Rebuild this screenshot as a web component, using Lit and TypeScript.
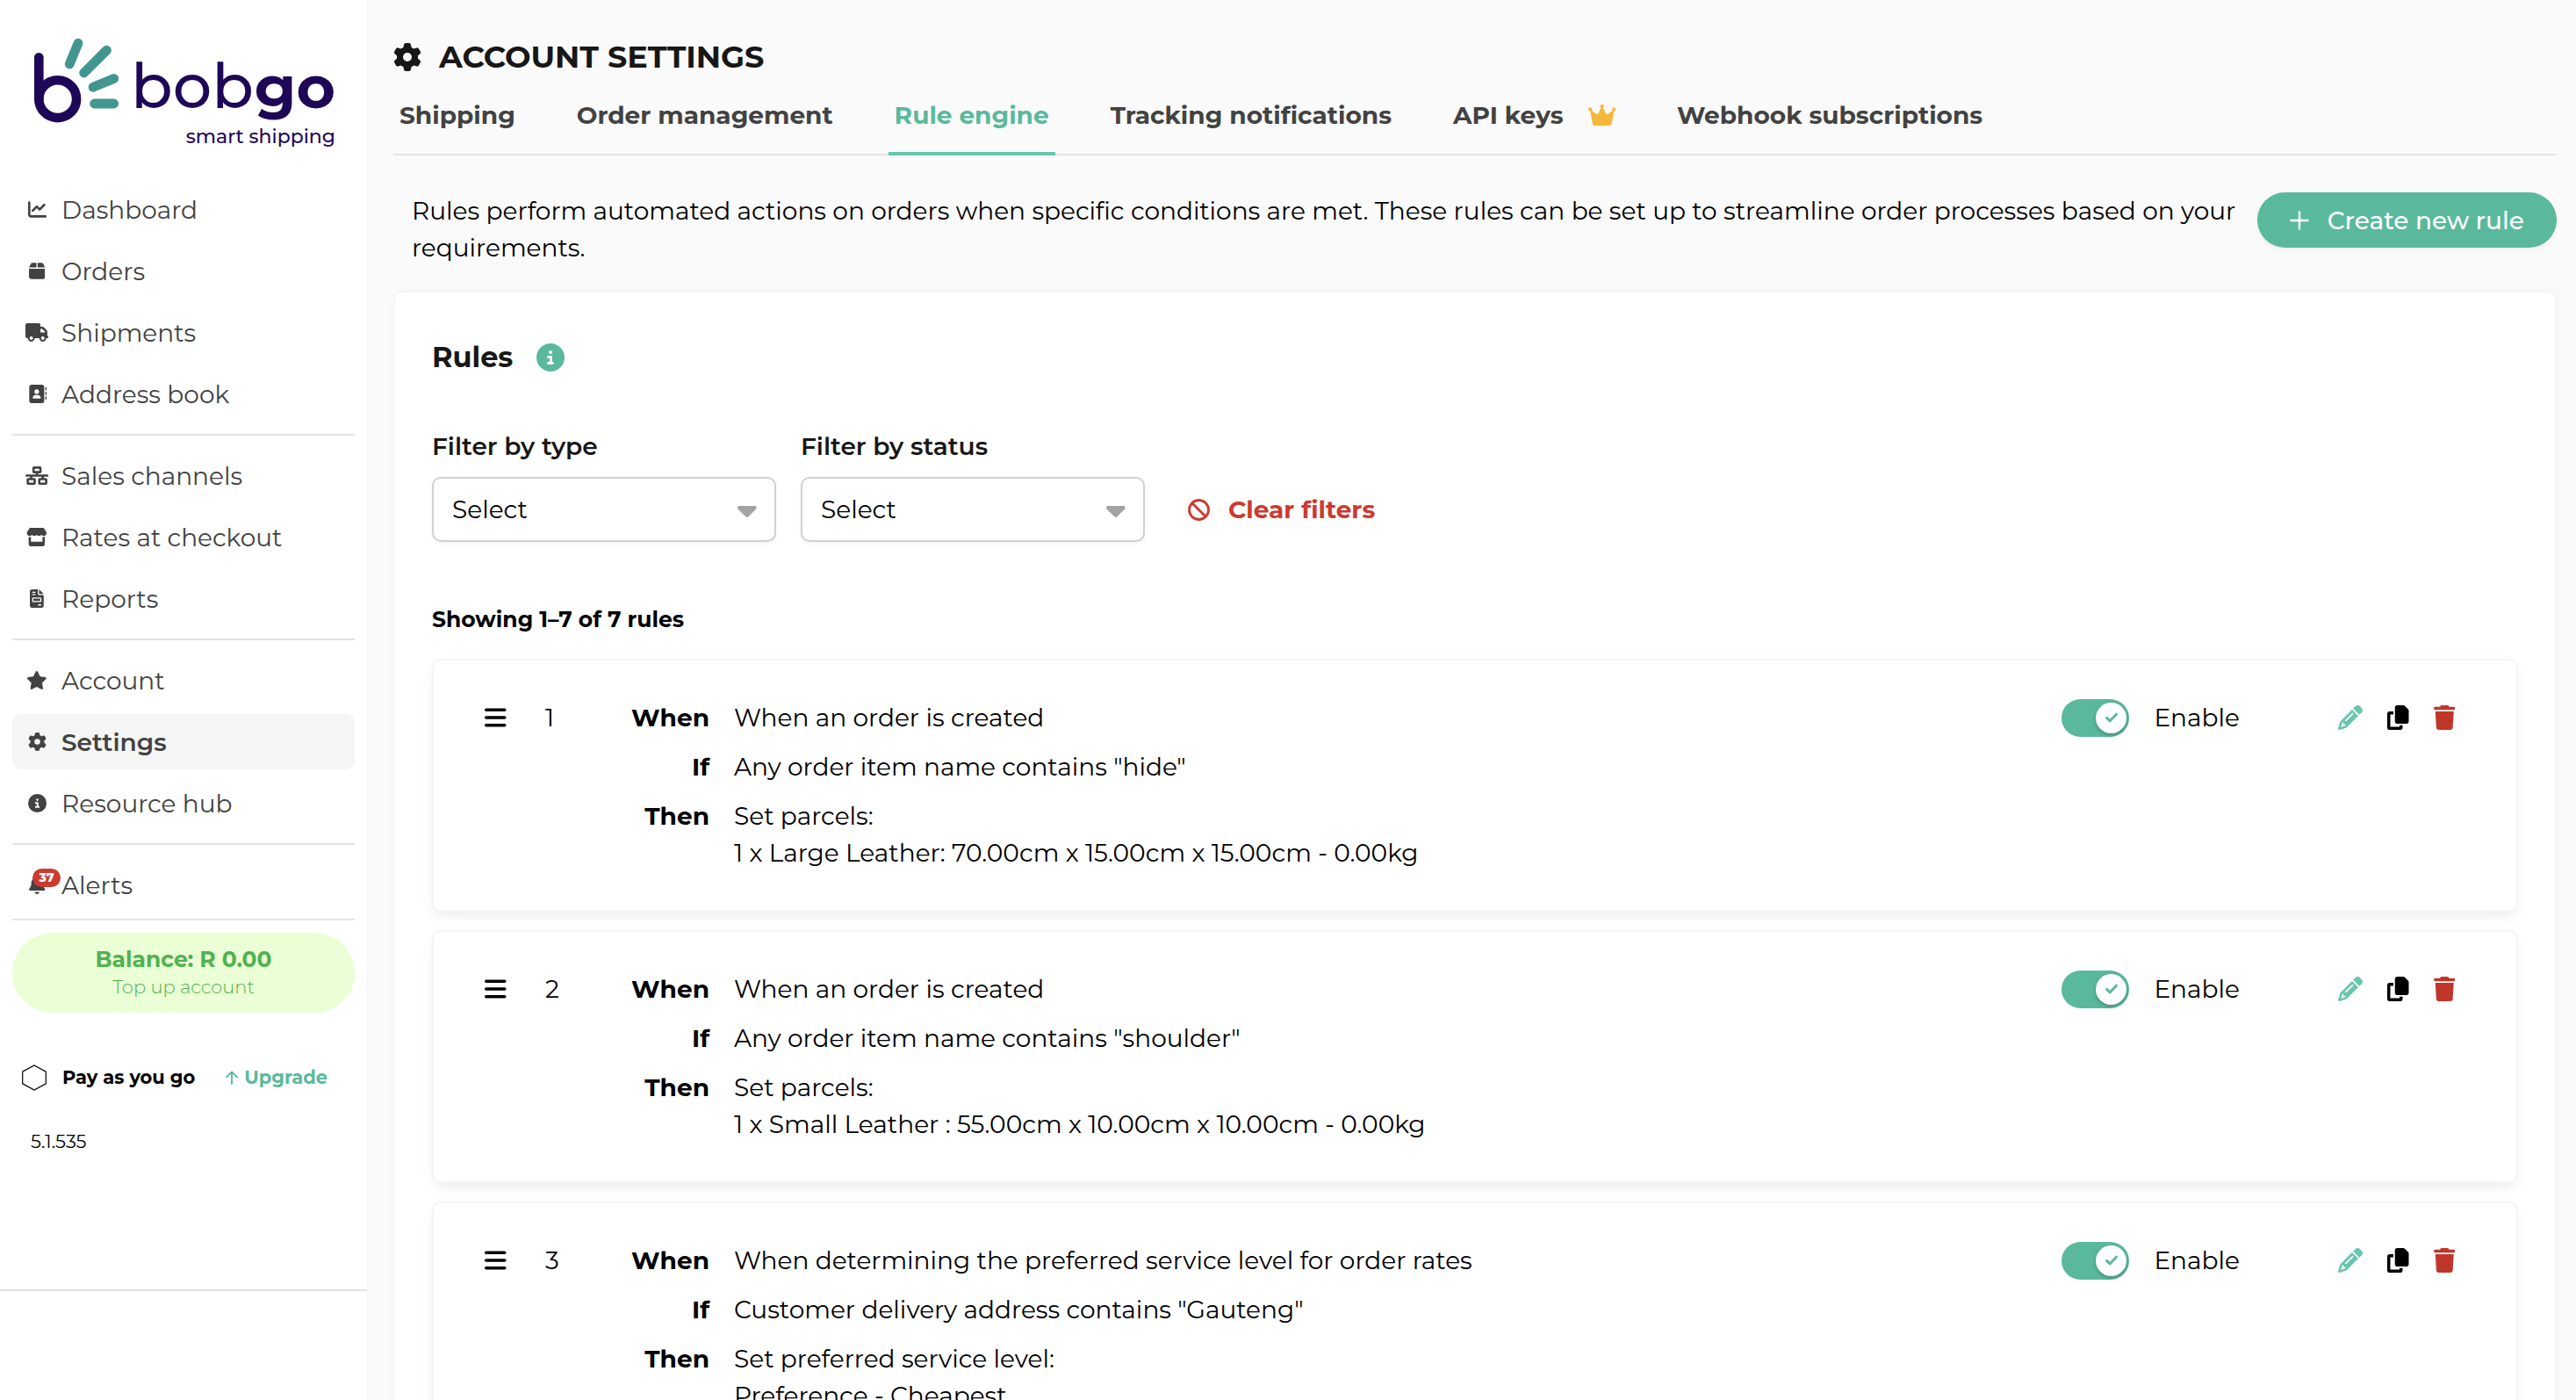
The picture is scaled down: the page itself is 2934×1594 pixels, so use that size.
import { LitElement, html, svg, css, nothing } from "lit";
import { customElement, property } from "lit/decorators.js";

type Glyph = { w: number; h: number; d: string };

const GLYPHS: Record<string, Glyph> = {
  chart: { w: 512, h: 512, d: "M64 64c0-17.700-14.300-32-32-32S0 46.300 0 64V400c0 44.200 35.800 80 80 80H480c17.700 0 32-14.300 32-32s-14.300-32-32-32H80c-8.800 0-16-7.200-16-16V64zm406.600 86.600c12.500-12.500 12.500-32.800 0-45.300s-32.800-12.500-45.300 0L320 210.700l-57.400-57.400c-12.500-12.500-32.800-12.500-45.300 0l-112 112c-12.500 12.500-12.500 32.800 0 45.300s32.800 12.500 45.300 0L240 221.300l57.400 57.400c12.500 12.500 32.800 12.500 45.300 0l128-128z" },
  box: { w: 448, h: 512, d: "M50.700 58.500L0 160H208V32H93.700C75.500 32 58.900 42.300 50.700 58.500zM240 160H448L397.300 58.500C389.100 42.300 372.500 32 354.300 32H240V160zm208 32H0V416c0 35.300 28.700 64 64 64H384c35.300 0 64-28.700 64-64V192z" },
  truck: { w: 640, h: 512, d: "M48 0C21.500 0 0 21.500 0 48V368c0 26.500 21.500 48 48 48H64c0 53 43 96 96 96s96-43 96-96H384c0 53 43 96 96 96s96-43 96-96h32c17.700 0 32-14.300 32-32s-14.300-32-32-32V288 256 237.300c0-17-6.700-33.300-18.700-45.300L512 114.700c-12-12-28.300-18.700-45.300-18.700H416V48c0-26.500-21.500-48-48-48H48zM416 160h50.700L544 237.300V256H416V160zM112 416a48 48 0 1 1 96 0 48 48 0 1 1 -96 0zm368-48a48 48 0 1 1 0 96 48 48 0 1 1 0-96z" },
  book: { w: 512, h: 512, d: "M96 0C60.700 0 32 28.700 32 64V448c0 35.300 28.700 64 64 64H384c35.300 0 64-28.700 64-64V64c0-35.300-28.700-64-64-64H96zM208 288h64c44.200 0 80 35.800 80 80c0 8.800-7.200 16-16 16H144c-8.800 0-16-7.200-16-16c0-44.200 35.800-80 80-80zm-32-96a64 64 0 1 1 128 0 64 64 0 1 1 -128 0zM512 80c0-8.800-7.200-16-16-16s-16 7.200-16 16v64c0 8.800 7.200 16 16 16s16-7.200 16-16V80zM496 192c-8.800 0-16 7.200-16 16v64c0 8.800 7.200 16 16 16s16-7.200 16-16V208c0-8.800-7.200-16-16-16zm16 144c0-8.800-7.200-16-16-16s-16 7.200-16 16v64c0 8.800 7.200 16 16 16s16-7.200 16-16V336z" },
  network: { w: 640, h: 512, d: "M256 64H384v64H256V64zM240 0c-26.500 0-48 21.500-48 48v96c0 26.500 21.500 48 48 48h48v32H32c-17.700 0-32 14.300-32 32s14.300 32 32 32h96v32H80c-26.500 0-48 21.500-48 48v96c0 26.500 21.500 48 48 48H240c26.500 0 48-21.500 48-48V368c0-26.500-21.500-48-48-48H192V288H448v32H400c-26.500 0-48 21.500-48 48v96c0 26.500 21.500 48 48 48H560c26.500 0 48-21.500 48-48V368c0-26.500-21.500-48-48-48H512V288h96c17.700 0 32-14.300 32-32s-14.300-32-32-32H352V192h48c26.500 0 48-21.500 48-48V48c0-26.500-21.500-48-48-48H240zM96 448V384H224v64H96zm320-64H544v64H416V384z" },
  store: { w: 576, h: 512, d: "M547.600 103.800L490.300 13.100C485.200 5 476.100 0 466.400 0H109.600C99.900 0 90.800 5 85.700 13.100L28.300 103.800c-29.600 46.800-3.400 111.900 51.900 119.400c4 .5 8.100 .8 12.100 .8c26.100 0 49.300-11.400 65.200-29c15.900 17.600 39.100 29 65.200 29c26.100 0 49.300-11.400 65.200-29c15.900 17.600 39.100 29 65.200 29c26.200 0 49.300-11.400 65.200-29c16 17.600 39.100 29 65.200 29c4.100 0 8.100-.3 12.100-.8c55.500-7.400 81.800-72.500 52.100-119.400zM499.700 254.900l-.1 0c-5.300 .7-10.700 1.100-16.200 1.100c-12.400 0-24.300-1.900-35.400-5.300V384H128V250.600c-11.200 3.500-23.200 5.400-35.600 5.400c-5.500 0-11-.4-16.300-1.100l-.1 0c-4.100-.6-8.100-1.300-12-2.300V384v64c0 35.300 28.700 64 64 64H448c35.300 0 64-28.700 64-64V384 252.600c-4 1-8 1.800-12.300 2.300z" },
  invoice: { w: 384, h: 512, d: "M64 0C28.700 0 0 28.700 0 64V448c0 35.300 28.700 64 64 64H320c35.300 0 64-28.700 64-64V160H256c-17.700 0-32-14.300-32-32V0H64zM256 0V128H384L256 0zM80 64h64c8.800 0 16 7.200 16 16s-7.200 16-16 16H80c-8.800 0-16-7.200-16-16s7.200-16 16-16zm0 64h64c8.800 0 16 7.200 16 16s-7.200 16-16 16H80c-8.800 0-16-7.200-16-16s7.200-16 16-16zm16 96H288c17.700 0 32 14.300 32 32v64c0 17.700-14.300 32-32 32H96c-17.700 0-32-14.300-32-32V256c0-17.700 14.300-32 32-32zm0 32v64H288V256H96zM240 416h64c8.800 0 16 7.200 16 16s-7.200 16-16 16H240c-8.800 0-16-7.200-16-16s7.200-16 16-16z" },
  star: { w: 576, h: 512, d: "M316.900 18C311.600 7 300.400 0 288.100 0s-23.400 7-28.800 18L195 150.300 51.400 171.500c-12 1.800-22 10.200-25.700 21.700s-.7 24.200 7.900 32.700L137.800 329 113.200 474.700c-2 12 3 24.200 12.900 31.300s23 8 33.800 2.300l128.300-68.500 128.300 68.500c10.800 5.700 23.900 4.900 33.800-2.300s14.900-19.300 12.900-31.300L438.500 329 542.700 225.900c8.600-8.500 11.700-21.200 7.900-32.700s-13.700-19.900-25.700-21.700L381.200 150.300 316.900 18z" },
  gear: { w: 512, h: 512, d: "M495.900 166.600c3.200 8.700 .5 18.400-6.400 24.600l-43.300 39.400c1.100 8.300 1.700 16.800 1.700 25.400s-.6 17.100-1.700 25.400l43.300 39.400c6.900 6.200 9.600 15.900 6.400 24.600c-4.400 11.900-9.700 23.300-15.800 34.300l-4.700 8.100c-6.600 11-14 21.400-22.100 31.200c-5.900 7.200-15.700 9.600-24.500 6.800l-55.700-17.700c-13.400 10.300-28.200 18.900-44 25.400l-12.500 57.100c-2 9.100-9 16.300-18.200 17.800c-13.800 2.300-28 3.500-42.500 3.500s-28.700-1.200-42.500-3.500c-9.200-1.500-16.200-8.700-18.200-17.800l-12.500-57.100c-15.800-6.500-30.600-15.100-44-25.400L83.100 425.900c-8.800 2.800-18.600 .3-24.500-6.800c-8.100-9.800-15.500-20.200-22.100-31.200l-4.700-8.100c-6.100-11-11.400-22.400-15.800-34.300c-3.200-8.700-.5-18.400 6.400-24.600l43.300-39.400C64.600 273.100 64 264.600 64 256s.6-17.100 1.700-25.400L22.400 191.200c-6.900-6.200-9.600-15.900-6.400-24.600c4.400-11.900 9.700-23.300 15.800-34.300l4.700-8.100c6.600-11 14-21.400 22.100-31.200c5.900-7.200 15.700-9.600 24.500-6.800l55.700 17.700c13.400-10.300 28.200-18.900 44-25.400l12.500-57.100c2-9.100 9-16.300 18.200-17.800C227.300 1.200 241.500 0 256 0s28.700 1.200 42.500 3.500c9.200 1.500 16.200 8.700 18.200 17.800l12.500 57.100c15.800 6.500 30.600 15.100 44 25.400l55.700-17.700c8.800-2.800 18.600-.3 24.500 6.800c8.100 9.800 15.500 20.200 22.100 31.200l4.700 8.100c6.100 11 11.400 22.400 15.800 34.300zM256 336a80 80 0 1 0 0-160 80 80 0 1 0 0 160z" },
  info: { w: 512, h: 512, d: "M256 512A256 256 0 1 0 256 0a256 256 0 1 0 0 512zM216 336h24V272H216c-13.300 0-24-10.700-24-24s10.700-24 24-24h48c13.300 0 24 10.700 24 24v88h8c13.300 0 24 10.700 24 24s-10.700 24-24 24H216c-13.300 0-24-10.700-24-24s10.700-24 24-24zm40-208a32 32 0 1 1 0 64 32 32 0 1 1 0-64z" },
  bell: { w: 448, h: 512, d: "M224 0c-17.700 0-32 14.300-32 32V51.200C119 66 64 130.600 64 208v18.800c0 47-17.300 92.400-48.500 127.600l-7.400 8.300c-8.400 9.400-10.400 22.900-5.300 34.400S19.400 416 32 416H416c12.600 0 24-7.400 29.200-18.900s3.100-25-5.300-34.400l-7.400-8.300C401.300 319.200 384 273.900 384 226.800V208c0-77.400-55-142-128-156.800V32c0-17.700-14.300-32-32-32zm45.300 493.300c12-12 18.700-28.300 18.700-45.300H224 160c0 17 6.700 33.300 18.700 45.300s28.300 18.700 45.300 18.700s33.300-6.700 45.300-18.700z" },
  crown: { w: 576, h: 512, d: "M309 106c11.400-7 19-19.700 19-34c0-22.100-17.900-40-40-40s-40 17.900-40 40c0 14.400 7.600 27 19 34L209.700 220.600c-9.100 18.200-32.700 23.400-48.600 10.700L72 160c5-6.700 8-15 8-24c0-22.100-17.900-40-40-40S0 113.900 0 136s17.900 40 40 40c.2 0 .5 0 .7 0L86.400 427.400c5.500 30.400 32 52.600 63 52.600H426.600c30.900 0 57.400-22.100 63-52.600L535.300 176c.2 0 .5 0 .7 0c22.100 0 40-17.900 40-40s-17.900-40-40-40s-40 17.900-40 40c0 9 3 17.300 8 24l-89.100 71.300c-15.900 12.700-39.500 7.500-48.600-10.700L309 106z" },
  bars: { w: 448, h: 512, d: "M0 96C0 78.300 14.300 64 32 64H416c17.700 0 32 14.300 32 32s-14.300 32-32 32H32C14.300 128 0 113.700 0 96zM0 256c0-17.700 14.300-32 32-32H416c17.700 0 32 14.300 32 32s-14.300 32-32 32H32c-17.700 0-32-14.300-32-32zM448 416c0 17.700-14.300 32-32 32H32c-17.700 0-32-14.300-32-32s14.300-32 32-32H416c17.700 0 32 14.300 32 32z" },
  pencil: { w: 512, h: 512, d: "M410.300 231l11.300-11.300-33.900-33.900-62.100-62.100L291.700 89.800l-11.300 11.300-22.600 22.600L58.600 322.900c-10.400 10.400-18 23.300-22.200 37.400L1 480.700c-2.500 8.400-.2 17.500 6.100 23.700s15.300 8.500 23.700 6.100l120.300-35.400c14.100-4.200 27-11.800 37.400-22.200L387.700 253.700 410.300 231zM160 399.400l-9.100 22.700c-4 3.100-8.500 5.400-13.300 6.900L59.400 452l23-78.100c1.400-4.900 3.800-9.400 6.900-13.300l22.700-9.100v32c0 8.800 7.200 16 16 16h32zM362.700 18.700L348.300 33.200 325.700 55.800 314.300 67.100l33.900 33.900 62.100 62.100 33.900 33.900 11.300-11.300 22.600-22.600 14.500-14.500c25-25 25-65.500 0-90.500L453.300 18.700c-25-25-65.500-25-90.500 0zm-47.400 168l-144 144c-6.200 6.200-16.400 6.200-22.600 0s-6.200-16.400 0-22.600l144-144c6.200-6.200 16.400-6.200 22.600 0s6.200 16.400 0 22.600z" },
  copy: { w: 448, h: 512, d: "M208 0H332.100c12.700 0 24.900 5.100 33.900 14.100l67.900 67.900c9 9 14.100 21.200 14.100 33.900V336c0 26.500-21.500 48-48 48H208c-26.500 0-48-21.500-48-48V48c0-26.500 21.500-48 48-48zM48 128h80v64H64V448H256V416h64v48c0 26.500-21.500 48-48 48H48c-26.500 0-48-21.500-48-48V176c0-26.500 21.500-48 48-48z" },
  trash: { w: 448, h: 512, d: "M135.200 17.700L128 32H32C14.300 32 0 46.300 0 64S14.300 96 32 96H416c17.700 0 32-14.300 32-32s-14.300-32-32-32H320l-7.200-14.300C307.400 6.800 296.300 0 284.200 0H163.800c-12.100 0-23.200 6.800-28.600 17.700zM416 128H32L53.200 467c1.600 25.300 22.600 45 47.900 45H346.900c25.300 0 46.300-19.700 47.900-45L416 128z" },
  caret: { w: 320, h: 192, d: "M137.400 182.600c12.500 12.500 32.800 12.500 45.300 0l128-128c9.200-9.200 11.900-22.900 6.900-34.900S301 0 288 0L32 0C19.100 0 7.400 7.800 2.400 19.800s-2.200 25.700 6.900 34.900l128 128z" },
};

/** Filled glyph; its height comes from the class, its width from the glyph's proportions. */
const icon = (name: string, cls: string) => {
  const g = GLYPHS[name];
  return html`<svg class="glyph ${cls}" viewBox="0 0 ${g.w} ${g.h}" aria-hidden="true">${svg`<path d=${g.d} fill="currentColor" fill-rule="nonzero"></path>`}</svg>`;
};

const base = css`
  *, *::before, *::after { box-sizing: border-box; }
  a { color: inherit; text-decoration: none; }
  button, select, input { font: inherit; color: inherit; margin: 0; }
  button { background: none; border: 0; padding: 0; cursor: pointer; }
  .glyph { display: block; flex: none; }
`;

type NavItem = { icon: string; label: string; active?: boolean; badge?: string };

const NAV: NavItem[][] = [
  [
    { icon: "chart", label: "Dashboard" },
    { icon: "box", label: "Orders" },
    { icon: "truck", label: "Shipments" },
    { icon: "book", label: "Address book" },
  ],
  [
    { icon: "network", label: "Sales channels" },
    { icon: "store", label: "Rates at checkout" },
    { icon: "invoice", label: "Reports" },
  ],
  [
    { icon: "star", label: "Account" },
    { icon: "gear", label: "Settings", active: true },
    { icon: "info", label: "Resource hub" },
  ],
  [{ icon: "bell", label: "Alerts", badge: "37" }],
];

@customElement("side-bar")
class SideBar extends LitElement {
  static styles = [base, css`
    :host {
      display: flex; flex-direction: column; width: 418px; flex: none;
      background: #fff; box-shadow: 0 0 4px rgba(0, 0, 0, 0.04); color: #424242;
    }
    .logo { display: block; padding: 40px 34px 31px 36px; }
    .logo svg { display: block; width: 100%; }
    .word { font-size: 70px; font-weight: 500; fill: #1e0757; }
    .heavy { font-weight: 700; font-size: 68px; }
    .tag { font-size: 22px; font-weight: 500; fill: #1e0757; }
    .body { flex: 1; min-height: 0; padding: 0 14px; }
    .group { list-style: none; margin: 0; padding: 0; display: grid; gap: 7px; }
    .rule { border: 0; height: 2px; background: #e3e3e3; margin: 14px 0; }
    .tight { margin: 7px 0 14px; }
    .item { display: flex; align-items: center; gap: 14px; height: 63px; padding: 0 14px; border-radius: 10px; position: relative; }
    .active { background: #f5f5f5; font-weight: 600; }
    .slot { width: 28px; display: flex; justify-content: center; }
    .nav-icon { height: 21px; }
    .badge {
      position: absolute; left: 23px; top: 13px; width: 32px; height: 21px; border-radius: 11px;
      background: #cc3a30; color: #fff; font-size: 14px; line-height: 21px; font-weight: 800; text-align: center;
    }
    .balance {
      width: 100%; height: 91px; border-radius: 46px; background: #eaffd5; color: #50b150;
      display: flex; flex-direction: column; align-items: center; justify-content: center;
    }
    .amount { font-size: 25px; line-height: 32px; font-weight: 700; }
    .topup { font-size: 21px; line-height: 32px; font-weight: 300; }
    .plan { display: flex; align-items: center; padding: 0 11px; margin-top: 58px; height: 32px; font-size: 21px; font-weight: 700; color: #000; }
    .hex { width: 28px; height: 30px; margin-right: 18px; flex: none; }
    .upgrade { display: flex; align-items: center; gap: 7px; margin-left: 35px; color: #5ab99d; }
    .up { width: 14px; height: 16px; }
    .version { margin: 41px 21px 0; font-size: 21px; line-height: 32px; color: #000; }
    .foot { height: 126px; border-top: 2px solid #e3e3e3; }
  `];

  render() {
    return html`
      <a class="logo" href="#home" aria-label="bobgo smart shipping">
        <svg viewBox="36 40 348 136">
          <g fill="none" stroke-linecap="round">
            <path d="M44.300 65.300V112.700" stroke="#1e0757" stroke-width="10.600"></path>
            <circle cx="65.700" cy="112.700" r="21.400" stroke="#1e0757" stroke-width="10.600"></circle>
            <path d="M89 49.200 79.200 73M121.500 57.200 95.600 83M129.700 89.400 106 99.300M107.600 118H129.700" stroke="#43968f" stroke-width="10.800"></path>
          </g>
          <text class="word" x="149" y="123">bob</text>
          <text class="word heavy" x="382" y="123" text-anchor="end">go</text>
          <text class="tag" x="382" y="163" text-anchor="end">smart shipping</text>
        </svg>
      </a>
      <div class="body">
        <nav>
          ${NAV.map((group, i) => html`
            ${i ? html`<hr class="rule" />` : nothing}
            <ul class="group">
              ${group.map((n) => html`<li>
                <a class="item ${n.active ? "active" : ""}" href="#${n.label}">
                  <span class="slot">${icon(n.icon, "nav-icon")}</span>
                  ${n.badge ? html`<span class="badge">${n.badge}</span>` : nothing}
                  <span>${n.label}</span>
                </a>
              </li>`)}
            </ul>`)}
        </nav>
        <hr class="rule tight" />
        <button class="balance">
          <span class="amount">Balance: R 0.00</span>
          <span class="topup">Top up account</span>
        </button>
        <div class="plan">
          <svg class="hex" viewBox="0 0 28 30" aria-hidden="true"><path d="M14 1 27.300 8.200V21.800L14 29 .7 21.800V8.200Z" fill="none" stroke="#000" stroke-width="1.200"></path></svg>
          <span>Pay as you go</span>
          <a class="upgrade" href="#upgrade">
            <svg class="up" viewBox="0 0 14 16" aria-hidden="true"><path d="M7 15V1.600M1 7.400 7 1.400 13 7.400" fill="none" stroke="currentColor" stroke-width="1.900" stroke-linecap="round" stroke-linejoin="round"></path></svg>
            Upgrade
          </a>
        </div>
        <p class="version">5.1.535</p>
      </div>
      <div class="foot"></div>
    `;
  }
}

type Rule = { when: string; cond: string; then: string[] };

const RULES: Rule[] = [
  { when: "When an order is created", cond: 'Any order item name contains "hide"', then: ["Set parcels:", "1 x Large Leather: 70.00cm x 15.00cm x 15.00cm - 0.00kg"] },
  { when: "When an order is created", cond: 'Any order item name contains "shoulder"', then: ["Set parcels:", "1 x Small Leather : 55.00cm x 10.00cm x 10.00cm - 0.00kg"] },
  { when: "When determining the preferred service level for order rates", cond: 'Customer delivery address contains "Gauteng"', then: ["Set preferred service level:", "Preference - Cheapest"] },
];

@customElement("rule-card")
class RuleCard extends LitElement {
  @property({ type: Number }) index = 0;
  @property({ attribute: false }) rule!: Rule;

  static styles = [base, css`
    :host {
      display: flex; align-items: flex-start; padding: 44px 70px 44px 58px;
      border: 2px solid #f5f5f5; border-radius: 10px; background: #fff; background-clip: padding-box;
      box-shadow: 0 8px 12px -2px rgba(0, 0, 0, 0.05), 0 6px 30px rgba(0, 0, 0, 0.02);
    }
    .handle, .tools, .switch { height: 42px; display: flex; align-items: center; }
    .handle { width: 25px; margin-right: 44px; }
    .icon { height: 28px; }
    .num { width: 54px; }
    .parts { flex: 1; min-width: 0; margin: 0; display: grid; grid-template-columns: 133px 1fr; gap: 14px 28px; }
    dt { text-align: right; font-weight: 700; }
    dd { margin: 0; }
    .switch { gap: 28px; cursor: pointer; position: relative; margin-right: 112px; }
    .box { appearance: none; width: 77px; height: 43px; border-radius: 22px; background: #5ab99d; flex: none; display: flex; align-items: center; justify-content: flex-end; padding: 0 3px; }
    .box::after { content: ""; width: 35px; height: 35px; border-radius: 50%; background: #fff; box-shadow: 0 2px 5px rgba(0, 0, 0, 0.25); }
    .box:not(:checked) { background: #bdbdbd; justify-content: flex-start; }
    .tick { position: absolute; left: 49px; top: 15px; width: 16px; height: 12px; pointer-events: none; }
    .tools { gap: 28px; }
    .edit { color: #68c6ae; }
    .del { color: #c0362a; }
  `];

  render() {
    const r = this.rule;
    return html`
      <button class="handle" aria-label="Move rule ${this.index}">${icon("bars", "icon")}</button>
      <span class="num">${this.index}</span>
      <dl class="parts">
        <dt>When</dt><dd>${r.when}</dd>
        <dt>If</dt><dd>${r.cond}</dd>
        <dt>Then</dt><dd>${r.then.map((t) => html`<div>${t}</div>`)}</dd>
      </dl>
      <label class="switch">
        <input class="box" type="checkbox" checked />
        <svg class="tick" viewBox="0 0 16 12" aria-hidden="true"><path d="M2.500 6.300 6.200 9.800 13.500 2.200" fill="none" stroke="#5ab99d" stroke-width="3" stroke-linecap="round" stroke-linejoin="round"></path></svg>
        <span>Enable</span>
      </label>
      <div class="tools">
        <button class="edit" aria-label="Edit rule">${icon("pencil", "icon")}</button>
        <button aria-label="Duplicate rule">${icon("copy", "icon")}</button>
        <button class="del" aria-label="Delete rule">${icon("trash", "icon")}</button>
      </div>
    `;
  }
}

const TABS = [
  { label: "Shipping" },
  { label: "Order management" },
  { label: "Rule engine", active: true },
  { label: "Tracking notifications" },
  { label: "API keys", crown: true },
  { label: "Webhook subscriptions" },
];

@customElement("app-root")
class AppRoot extends LitElement {
  static styles = [base, css`
    :host {
      display: flex; height: 100vh; overflow: hidden; background: #fafafa; color: #000;
      font-family: Montserrat, Inter, "Open Sans", sans-serif; font-size: 28px; line-height: 42px;
    }
    .main { flex: 1; min-width: 0; padding: 43px 22px 0 30px; }
    .title { display: flex; align-items: center; gap: 20px; margin: 0 0 23px; font-size: 35px; line-height: 44px; font-weight: 700; color: #171717; }
    .title-icon { height: 32px; }
    .tabs { display: flex; gap: 56px; box-shadow: inset 0 -2px #e3e3e3; font-weight: 700; color: #424242; }
    .tab { display: flex; align-items: center; gap: 28px; padding: 0 7px 21px; border-bottom: 4px solid transparent; }
    .current { color: #5ab99d; border-color: #68c6ae; }
    .crown { height: 28px; color: #f5b83d; }
    .intro { display: flex; align-items: flex-start; gap: 20px; margin: 42px 0 28px; padding-left: 21px; }
    .lead { flex: 1; margin: 0; }
    .create {
      display: flex; align-items: center; gap: 20px; height: 63px; padding: 0 37px 0 36px; border-radius: 32px; flex: none;
      background: #5ab99d; color: #fff; font-weight: 500; box-shadow: 0 2px 6px rgba(0, 0, 0, 0.06);
    }
    .plus { width: 24px; height: 24px; }
    .panel { background: #fff; border: 2px solid #f5f5f5; border-radius: 10px; padding: 53px 42px; box-shadow: 0 2px 12px rgba(0, 0, 0, 0.03); }
    .heading { display: flex; align-items: center; gap: 27px; }
    h2 { margin: 0; font-size: 32px; line-height: 42px; font-weight: 700; color: #171717; }
    .info { height: 32px; color: #5ab99d; }
    .filters { display: flex; align-items: flex-end; gap: 28px; margin-top: 59px; }
    .field { display: flex; flex-direction: column; gap: 14px; width: 392px; font-weight: 600; color: #171717; }
    .pick { position: relative; display: block; }
    select {
      appearance: none; display: block; width: 100%; height: 74px; padding: 0 21px; font-weight: 400; color: #000;
      border: 2px solid #d1d1d1; border-radius: 10px; background: #fff; box-shadow: 0 2px 4px rgba(0, 0, 0, 0.05);
    }
    .caret { position: absolute; right: 22px; top: 33px; height: 13px; color: #a3a3a3; pointer-events: none; }
    .clear { display: flex; align-items: center; gap: 21px; height: 74px; padding: 0 21px; color: #cc3a30; font-weight: 700; }
    .ban { width: 25px; height: 25px; }
    .count { margin: 67px 0 24px; font-size: 25px; font-weight: 700; }
    .list { display: grid; gap: 21px; }
  `];

  private field(id: string, label: string) {
    return html`<div class="field">
      <label for=${id}>${label}</label>
      <span class="pick">
        <select id=${id}><option>Select</option></select>
        ${icon("caret", "caret")}
      </span>
    </div>`;
  }

  render() {
    return html`
      <side-bar></side-bar>
      <main class="main">
        <h1 class="title">${icon("gear", "title-icon")}ACCOUNT SETTINGS</h1>
        <nav class="tabs">
          ${TABS.map((t) => html`<a class="tab ${t.active ? "current" : ""}" href="#${t.label}">${t.label}${t.crown ? icon("crown", "crown") : nothing}</a>`)}
        </nav>
        <div class="intro">
          <p class="lead">Rules perform automated actions on orders when specific conditions are met. These rules can be set up to streamline order processes based on your requirements.</p>
          <button class="create">
            <svg class="plus" viewBox="0 0 24 24" aria-hidden="true"><path d="M12 2.500V21.500M2.500 12H21.500" stroke="currentColor" stroke-width="2.400" stroke-linecap="round"></path></svg>
            Create new rule
          </button>
        </div>
        <section class="panel">
          <div class="heading"><h2>Rules</h2>${icon("info", "info")}</div>
          <div class="filters">
            ${this.field("type", "Filter by type")}
            ${this.field("status", "Filter by status")}
            <button class="clear">
              <svg class="ban" viewBox="0 0 25 25" aria-hidden="true"><path d="M4.500 4.500 20.500 20.500" stroke="currentColor" stroke-width="2.800"></path><circle cx="12.500" cy="12.500" r="11" fill="none" stroke="currentColor" stroke-width="2.800"></circle></svg>
              Clear filters
            </button>
          </div>
          <p class="count">Showing 1–7 of 7 rules</p>
          <div class="list">${RULES.map((r, i) => html`<rule-card .index=${i + 1} .rule=${r}></rule-card>`)}</div>
        </section>
      </main>
    `;
  }
}
